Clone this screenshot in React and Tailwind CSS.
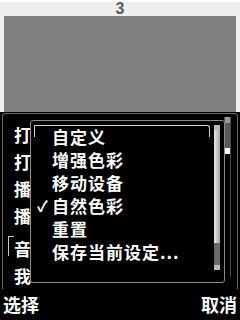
import React from 'react';

const outerItems = ['打', '打', '播', '播', '音', '我'];
const menuItems = [
    { label: '自定义', checked: false },
    { label: '增强色彩', checked: false },
    { label: '移动设备', checked: false },
    { label: '自然色彩', checked: true },
    { label: '重置', checked: false },
    { label: '保存当前设定...', checked: false },
];

const font = { fontFamily: '"Noto Sans CJK SC", "Noto Sans", sans-serif' };

const App = () => {
    return (
        <div className="w-[240px] h-[320px] bg-black flex flex-col overflow-hidden" style={font}>
            {/* title strip */}
            <div className="h-[16px] bg-[#efefef] shadow-[inset_0_2px_0_#ffffff] text-center text-[#5a5a5a] text-[16px] leading-[17px] font-bold font-['Liberation_Sans',sans-serif]">
                3
            </div>

            {/* grey content */}
            <div className="h-[96px] bg-[#efefef] px-[4px]">
                <div className="h-full bg-[#808080]" />
            </div>

            {/* dialog area */}
            <div className="relative flex-1 bg-black">
                {/* outer list */}
                <div className="absolute left-[2px] top-[1px] w-[236px] h-[176px] rounded-tl-[4px] rounded-tr-[4px] border-t border-l border-r border-[#6a6a6a]">
                    <div className="flex flex-col pl-[11px] pt-[11px] gap-[8px]">
                        {outerItems.map((t, i) => (
                            <div
                                key={i}
                                className={`relative h-[19px] flex items-center text-white text-[17px] leading-[19px] font-semibold ${i === 4 ? 'mt-[6px]' : ''}`}
                            >
                                {i === 4 && (
                                    <div className="absolute -left-[6px] -top-[3px] w-[6px] h-[20px] border-l border-t border-[#c8c8c8]" />
                                )}
                                {t}
                            </div>
                        ))}
                    </div>
                    {/* outer scrollbar */}
                    <div className="absolute right-[6px] top-[3px] w-[7px] h-[160px] border-l border-r border-[#4a4a4a] flex flex-col">
                        <div className="h-[6px] bg-[#9a9a9a]" />
                        <div className="h-[25px] bg-[#5a5a5a]" />
                        <div className="h-[6px] bg-white" />
                    </div>
                </div>

                {/* popup menu */}
                <div className="absolute left-[30px] top-[8px] w-[195px] h-[163px] rounded-[3px] border border-[#8a8a8a] bg-black">
                    <div className="relative flex flex-col pt-[4px] pl-[3px] pr-[14px]">
                        {/* highlight frame of first item */}
                        <div className="absolute left-[3px] right-[14px] top-[4px] h-[12px] border-t border-l border-r border-[#cfcfcf] rounded-tr-[3px]" />
                        {menuItems.map((m, i) => (
                            <div
                                key={i}
                                className="h-[23px] flex items-center text-white text-[17px] leading-[20px] tracking-[1px] font-semibold"
                            >
                                <span className="w-[18px] text-[15px] text-center">{m.checked ? '✓' : ''}</span>
                                {m.label}
                            </div>
                        ))}
                    </div>
                    {/* inner scrollbar */}
                    <div className="absolute right-[4px] top-[4px] w-[6px] h-[145px] flex flex-col">
                        <div className="h-[5px] bg-[#bbbbbb]" />
                        <div className="h-[113px] bg-gradient-to-r from-[#e8e8e8] to-[#a8a8a8]" />
                        <div className="flex-1 bg-[#6a6a6a]" />
                        <div className="h-[5px] bg-[#bbbbbb]" />
                    </div>
                </div>
            </div>

            {/* softkeys */}
            <div className="h-[32px] flex items-center justify-between px-[3px] text-white text-[18px] font-semibold">
                <span>选择</span>
                <span>取消</span>
            </div>
        </div>
    );
};

export default App;
